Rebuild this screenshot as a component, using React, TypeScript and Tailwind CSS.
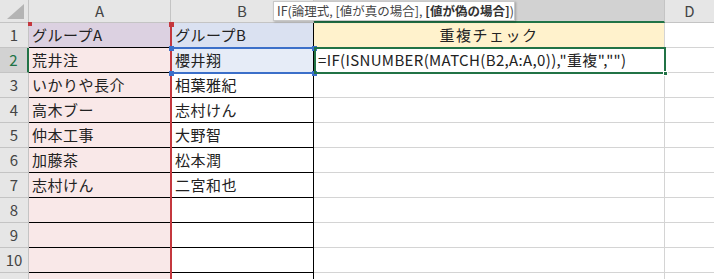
const groupA = ['グループA', '荒井注', 'いかりや長介', '高木ブー', '仲本工事', '加藤茶', '志村けん', '', '', '', '']
const groupB = ['グループB', '櫻井翔', '相葉雅紀', '志村けん', '大野智', '松本潤', '二宮和也', '', '', '', '']

const font = { fontFamily: '"Noto Sans CJK JP", "Noto Sans", sans-serif' }

function ColumnHeader() {
  return (
    <div className="flex h-[23px] text-[15px] text-[#444]">
      <div className="relative w-[29px] shrink-0 border-r border-b border-[#c4c4c4] bg-[#e6e6e6]">
        <svg className="absolute right-[4px] bottom-[3px]" width="17" height="15" viewBox="0 0 17 15">
          <polygon points="17,0 17,15 0,15" fill="#b4b4b4" />
        </svg>
      </div>
      <div className="flex w-[142px] shrink-0 items-center justify-center border-r border-b border-[#c4c4c4] bg-[#e6e6e6]">A</div>
      <div className="flex w-[143px] shrink-0 items-center justify-center border-r border-b border-[#c4c4c4] bg-[#e6e6e6]">B</div>
      {/* C header sits under the tooltip */}
      <div className="w-[351px] shrink-0 border-r border-[#c4c4c4] border-b-2 border-b-[#217346] bg-[#d2d2d2]" />
      <div className="flex flex-1 items-center justify-center border-b border-[#c4c4c4] bg-[#e6e6e6]">D</div>
    </div>
  )
}

function Row({ n }: { n: number }) {
  const i = n - 1
  const active = n === 2
  const aBg = n === 1 ? 'bg-[#dcd1e1]' : 'bg-[#f9e8e8]'
  const bBg = n === 1 ? 'bg-[#dae1f1]' : n === 2 ? 'bg-[#e6ecf7]' : 'bg-white'
  return (
    <div className="flex h-[25px] shrink-0 text-[15px] text-[#222]">
      <div
        className={
          active
            ? 'flex w-[29px] shrink-0 items-center justify-center border-b border-[#c4c4c4] border-r-2 border-r-[#217346] bg-[#d2d2d2] text-[#217346]'
            : 'flex w-[29px] shrink-0 items-center justify-center border-r border-b border-[#c4c4c4] bg-[#e6e6e6] text-[#444]'
        }
      >
        {n < 11 ? n : ''}
      </div>
      <div className={`flex w-[142px] shrink-0 items-center border-b border-black pl-[3px] tracking-[0.5px] ${aBg}`}>{groupA[i]}</div>
      <div className={`flex w-[143px] shrink-0 items-center border-b border-r border-black pl-[4px] tracking-[0.5px] ${bBg}`}>{groupB[i]}</div>
      {n === 1 ? (
        <div className="flex w-[351px] shrink-0 items-center justify-center border-r border-[#d4d4d4] bg-[#fff2cc] tracking-[1.5px]">
          重複チェック
        </div>
      ) : n === 2 ? (
        <div className="flex w-[351px] shrink-0 items-center pl-[4px] tracking-[0.35px]">=IF(ISNUMBER(MATCH(B2,A:A,0)),"重複","")</div>
      ) : (
        <div className="w-[351px] shrink-0 border-r border-b border-[#d4d4d4]" />
      )}
      <div className="flex-1 border-b border-[#d4d4d4]" />
    </div>
  )
}

export default function App() {
  return (
    <div className="relative h-[279px] w-[714px] overflow-hidden bg-white" style={font}>
      <ColumnHeader />
      {[1, 2, 3, 4, 5, 6, 7, 8, 9, 10, 11].map((n) => (
        <Row key={n} n={n} />
      ))}

      {/* A:A reference highlight */}
      <div className="absolute top-[23px] bottom-0 left-[170px] w-[2px] bg-[#c4373e]" />
      <div className="absolute top-[22px] left-[28px] h-[4px] w-[4px] bg-[#c4373e]" />
      <div className="absolute top-[22px] left-[169px] h-[5px] w-[5px] bg-[#c4373e]" />

      {/* B2 reference highlight */}
      <div className="absolute top-[47px] left-[171px] h-[2px] w-[144px] bg-[#3b6fc9]" />
      <div className="absolute top-[72px] left-[171px] h-[2px] w-[144px] bg-[#3b6fc9]" />
      <div className="absolute top-[46px] left-[169px] h-[5px] w-[5px] bg-[#3b6fc9]" />
      <div className="absolute top-[71px] left-[169px] h-[5px] w-[5px] bg-[#3b6fc9]" />
      <div className="absolute top-[46px] left-[312px] h-[5px] w-[5px] bg-[#3b6fc9]" />
      <div className="absolute top-[71px] left-[312px] h-[5px] w-[5px] bg-[#3b6fc9]" />

      {/* C2 active cell */}
      <div className="absolute top-[47px] left-[314px] h-[27px] w-[352px] border-2 border-[#217346]" />
      <div className="absolute top-[71px] left-[663px] h-[5px] w-[5px] border border-white bg-[#217346]" />

      {/* function tooltip */}
      <div className="absolute top-[1px] left-[273px] flex h-[20px] w-[242px] items-center whitespace-nowrap border border-[#c8c8c8] bg-white pl-[3px] text-[12.5px] text-[#444] shadow-[1px_1px_2px_rgba(0,0,0,0.25)]">
        IF(論理式, [値が真の場合],&nbsp;<span className="font-bold text-[#333]">[値が偽の場合]</span>)
      </div>
    </div>
  )
}
